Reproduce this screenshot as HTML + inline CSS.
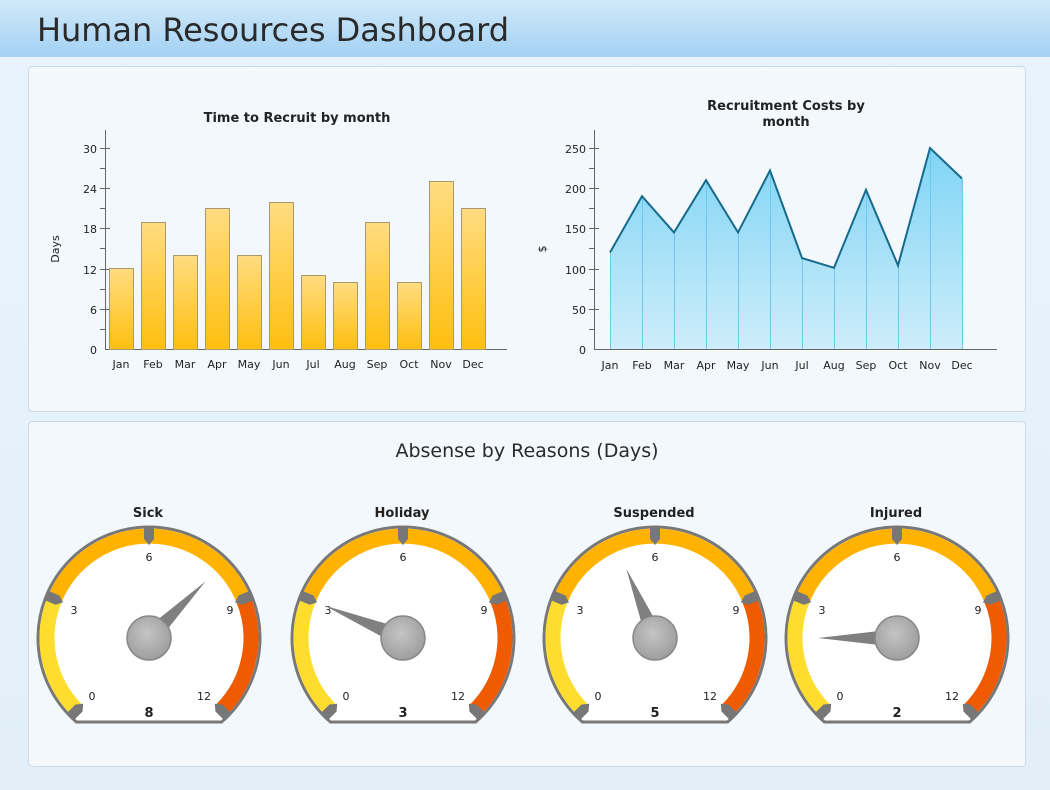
<!DOCTYPE html>
<html><head><meta charset="utf-8"><style>
html,body{margin:0;padding:0;width:1050px;height:790px;overflow:hidden;background:#e4f1fc;font-family:"DejaVu Sans","Liberation Sans",sans-serif;}
</style></head><body>
<svg width="1050" height="790" viewBox="0 0 1050 790" xmlns="http://www.w3.org/2000/svg" font-family="DejaVu Sans, Liberation Sans, sans-serif">
<defs>
<linearGradient id="hdr" x1="0" y1="0" x2="0" y2="1"><stop offset="0" stop-color="#d0e9fa"/><stop offset="1" stop-color="#a3d1f3"/></linearGradient>
<linearGradient id="pg" x1="0" y1="0" x2="0" y2="1"><stop offset="0" stop-color="#e8f3fd"/><stop offset="1" stop-color="#e2eff9"/></linearGradient>
<linearGradient id="bar" x1="0" y1="0" x2="0" y2="1"><stop offset="0" stop-color="#ffdc80"/><stop offset="1" stop-color="#ffbf10"/></linearGradient>
<linearGradient id="area" x1="0" y1="0" x2="0" y2="1"><stop offset="0" stop-color="#7fd4f4"/><stop offset="1" stop-color="#cdedfb"/></linearGradient>
<radialGradient id="hub" cx="0.45" cy="0.4" r="0.6"><stop offset="0" stop-color="#c4c4c4"/><stop offset="1" stop-color="#9e9e9e"/></radialGradient>
<g id="gauge">
<path d="M-72.6,84 A111,111 0 1 1 72.6,84 Z" fill="#fff" stroke="#787878" stroke-width="3"/>
<path d="M-72.1,72.1 A102,102 0 0 1 -94.2,-39" fill="none" stroke="#ffdd2e" stroke-width="15"/>
<path d="M-94.2,-39 A102,102 0 0 1 94.2,-39" fill="none" stroke="#ffb300" stroke-width="15"/>
<path d="M94.2,-39 A102,102 0 0 1 72.1,72.1" fill="none" stroke="#f05a00" stroke-width="15"/>
<g fill="#777"><polygon points="-5,-112 5,-112 5,-99 0,-93 -5,-99" transform="rotate(-135)"/><polygon points="-5,-112 5,-112 5,-99 0,-93 -5,-99" transform="rotate(-67.5)"/><polygon points="-5,-112 5,-112 5,-99 0,-93 -5,-99"/><polygon points="-5,-112 5,-112 5,-99 0,-93 -5,-99" transform="rotate(67.5)"/><polygon points="-5,-112 5,-112 5,-99 0,-93 -5,-99" transform="rotate(135)"/></g>
<g font-size="11" fill="#222" text-anchor="middle"><text x="0" y="-77">6</text><text x="-75" y="-24">3</text><text x="81" y="-24">9</text><text x="-57" y="62">0</text><text x="55" y="62">12</text></g>
</g>
</defs>
<rect width="1050" height="790" fill="url(#pg)"/>
<rect width="1050" height="57" fill="url(#hdr)"/>
<text x="37" y="41" font-size="32" fill="#2a2a2a" textLength="472">Human Resources Dashboard</text>
<rect x="28.5" y="66.5" width="997" height="345" rx="4" fill="#f3f8fd" stroke="#cfd9e1"/>
<rect x="28.5" y="421.5" width="997" height="345" rx="4" fill="#f3f8fd" stroke="#cfd9e1"/>

<text x="297" y="122" font-size="13" font-weight="bold" fill="#222" text-anchor="middle">Time to Recruit by month</text>
<text transform="translate(59,249) rotate(-90)" font-size="11" fill="#222" text-anchor="middle">Days</text>
<g stroke="#666" stroke-width="1">
<line x1="105.5" y1="130" x2="105.5" y2="349"/><line x1="105" y1="349.5" x2="507" y2="349.5"/>
<line x1="100" y1="148.5" x2="110" y2="148.5"/><line x1="100" y1="188.5" x2="110" y2="188.5"/><line x1="100" y1="228.5" x2="110" y2="228.5"/><line x1="100" y1="269.5" x2="110" y2="269.5"/><line x1="100" y1="309.5" x2="110" y2="309.5"/>
<line x1="100" y1="168.5" x2="105" y2="168.5"/><line x1="100" y1="208.5" x2="105" y2="208.5"/><line x1="100" y1="248.5" x2="105" y2="248.5"/><line x1="100" y1="289.5" x2="105" y2="289.5"/><line x1="100" y1="329.5" x2="105" y2="329.5"/>
</g>
<g font-size="11" fill="#222" text-anchor="end"><text x="97" y="153">30</text><text x="97" y="193">24</text><text x="97" y="233">18</text><text x="97" y="274">12</text><text x="97" y="314">6</text><text x="97" y="354">0</text></g>
<g fill="url(#bar)" stroke="#a89a70" stroke-width="1">
<rect x="109.5" y="268.5" width="24" height="81"/><rect x="141.5" y="222.5" width="24" height="127"/><rect x="173.5" y="255.5" width="24" height="94"/><rect x="205.5" y="208.5" width="24" height="141"/><rect x="237.5" y="255.5" width="24" height="94"/><rect x="269.5" y="202.5" width="24" height="147"/><rect x="301.5" y="275.5" width="24" height="74"/><rect x="333.5" y="282.5" width="24" height="67"/><rect x="365.5" y="222.5" width="24" height="127"/><rect x="397.5" y="282.5" width="24" height="67"/><rect x="429.5" y="181.5" width="24" height="168"/><rect x="461.5" y="208.5" width="24" height="141"/>
</g>
<g font-size="11" fill="#222" text-anchor="middle"><text x="121" y="368">Jan</text><text x="153" y="368">Feb</text><text x="185" y="368">Mar</text><text x="217" y="368">Apr</text><text x="249" y="368">May</text><text x="281" y="368">Jun</text><text x="313" y="368">Jul</text><text x="345" y="368">Aug</text><text x="377" y="368">Sep</text><text x="409" y="368">Oct</text><text x="441" y="368">Nov</text><text x="473" y="368">Dec</text></g>

<text x="786" y="110" font-size="13" font-weight="bold" fill="#222" text-anchor="middle">Recruitment Costs by</text>
<text x="786" y="126" font-size="13" font-weight="bold" fill="#222" text-anchor="middle">month</text>
<text transform="translate(546,249) rotate(-90)" font-size="11" fill="#222" text-anchor="middle">$</text>
<polygon points="610,252.5 642,196.2 674,232.4 706,180.2 738,232.4 770,170.5 802,258.1 834,267.8 866,189.8 898,265.4 930,148 962,178.6 962,349 610,349" fill="url(#area)"/>
<g stroke="#6ccaf0" stroke-width="1"><line x1="642.5" y1="197" x2="642.5" y2="349"/><line x1="674.5" y1="233" x2="674.5" y2="349"/><line x1="706.5" y1="181" x2="706.5" y2="349"/><line x1="738.5" y1="233" x2="738.5" y2="349"/><line x1="770.5" y1="171" x2="770.5" y2="349"/><line x1="802.5" y1="258" x2="802.5" y2="349"/><line x1="834.5" y1="268" x2="834.5" y2="349"/><line x1="866.5" y1="190" x2="866.5" y2="349"/><line x1="898.5" y1="265" x2="898.5" y2="349"/><line x1="930.5" y1="148" x2="930.5" y2="349"/><line x1="962.5" y1="179" x2="962.5" y2="349"/><line x1="610.5" y1="253" x2="610.5" y2="349"/></g>
<polyline points="610,252.5 642,196.2 674,232.4 706,180.2 738,232.4 770,170.5 802,258.1 834,267.8 866,189.8 898,265.4 930,148 962,178.6" fill="none" stroke="#166a8c" stroke-width="2"/>
<g stroke="#666" stroke-width="1">
<line x1="594.5" y1="130" x2="594.5" y2="349"/><line x1="594" y1="349.5" x2="997" y2="349.5"/>
<line x1="589" y1="148.5" x2="599" y2="148.5"/><line x1="589" y1="188.5" x2="599" y2="188.5"/><line x1="589" y1="228.5" x2="599" y2="228.5"/><line x1="589" y1="269.5" x2="599" y2="269.5"/><line x1="589" y1="309.5" x2="599" y2="309.5"/>
<line x1="589" y1="168.5" x2="594" y2="168.5"/><line x1="589" y1="208.5" x2="594" y2="208.5"/><line x1="589" y1="248.5" x2="594" y2="248.5"/><line x1="589" y1="289.5" x2="594" y2="289.5"/><line x1="589" y1="329.5" x2="594" y2="329.5"/>
</g>
<g font-size="11" fill="#222" text-anchor="end"><text x="586" y="153">250</text><text x="586" y="193">200</text><text x="586" y="233">150</text><text x="586" y="274">100</text><text x="586" y="314">50</text><text x="586" y="354">0</text></g>
<g font-size="11" fill="#222" text-anchor="middle"><text x="610" y="369">Jan</text><text x="642" y="369">Feb</text><text x="674" y="369">Mar</text><text x="706" y="369">Apr</text><text x="738" y="369">May</text><text x="770" y="369">Jun</text><text x="802" y="369">Jul</text><text x="834" y="369">Aug</text><text x="866" y="369">Sep</text><text x="898" y="369">Oct</text><text x="930" y="369">Nov</text><text x="962" y="369">Dec</text></g>

<text x="527" y="457" font-size="19" fill="#2a2a2a" text-anchor="middle">Absense by Reasons (Days)</text>
<g font-size="13" font-weight="bold" fill="#222" text-anchor="middle"><text x="148" y="517">Sick</text><text x="402" y="517">Holiday</text><text x="654" y="517">Suspended</text><text x="896" y="517">Injured</text></g>

<g transform="translate(149,638)"><use href="#gauge"/><polygon points="-9,0 9,0 0,-80" fill="#808080" transform="rotate(45)"/><circle r="22" fill="url(#hub)" stroke="#888" stroke-width="1.5"/><text x="0" y="79" font-size="13" font-weight="bold" fill="#222" text-anchor="middle">8</text></g>
<g transform="translate(403,638)"><use href="#gauge"/><polygon points="-9,0 9,0 0,-85" fill="#808080" transform="rotate(-67.5)"/><circle r="22" fill="url(#hub)" stroke="#888" stroke-width="1.5"/><text x="0" y="79" font-size="13" font-weight="bold" fill="#222" text-anchor="middle">3</text></g>
<g transform="translate(655,638)"><use href="#gauge"/><polygon points="-9,0 9,0 0,-75" fill="#808080" transform="rotate(-22.5)"/><circle r="22" fill="url(#hub)" stroke="#888" stroke-width="1.5"/><text x="0" y="79" font-size="13" font-weight="bold" fill="#222" text-anchor="middle">5</text></g>
<g transform="translate(897,638)"><use href="#gauge"/><polygon points="-9,0 9,0 0,-79" fill="#808080" transform="rotate(-90)"/><circle r="22" fill="url(#hub)" stroke="#888" stroke-width="1.5"/><text x="0" y="79" font-size="13" font-weight="bold" fill="#222" text-anchor="middle">2</text></g>
</svg>
</body></html>
